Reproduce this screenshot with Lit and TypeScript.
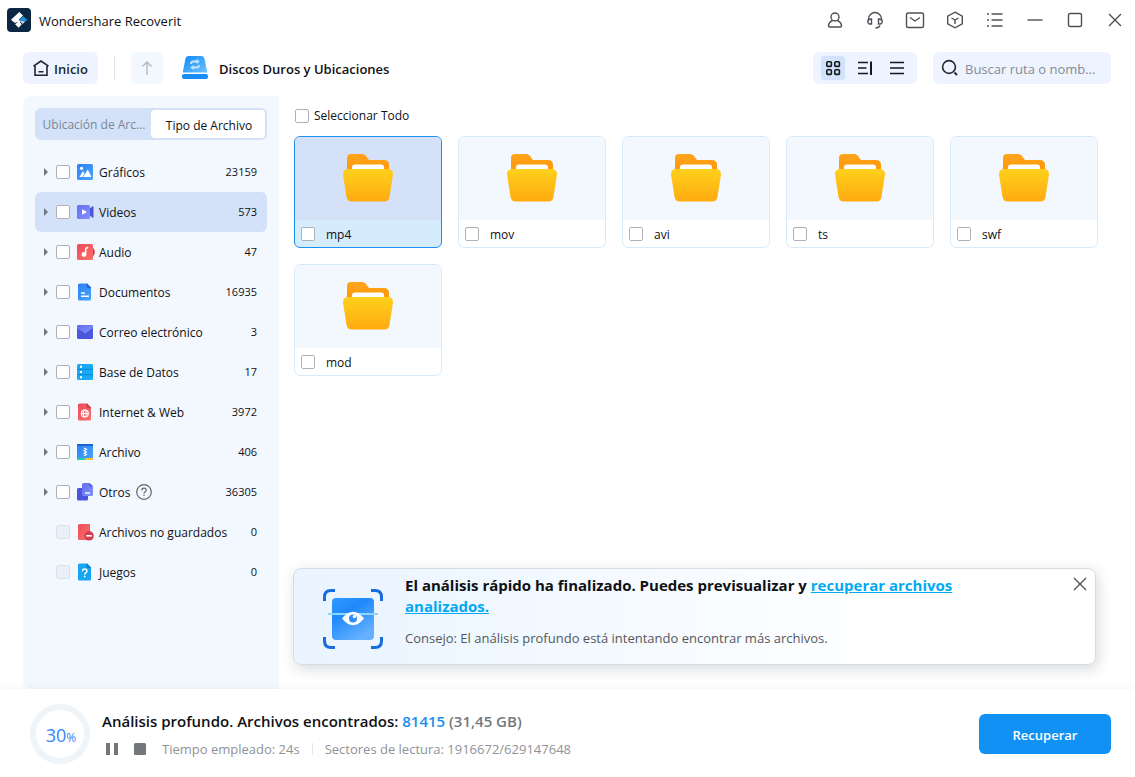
import { LitElement, html, svg, css, nothing, TemplateResult } from "lit";
import { customElement, property, state } from "lit/decorators.js";
import { classMap } from "lit/directives/class-map.js";

const controls = css`
  *,
  *::before,
  *::after {
    box-sizing: border-box;
  }
  button {
    font: inherit;
    color: inherit;
    border: 0;
    padding: 0;
    background: none;
    cursor: pointer;
    display: flex;
    align-items: center;
    justify-content: center;
  }
  svg {
    display: block;
    flex: none;
  }
  .check {
    appearance: none;
    flex: none;
    width: 14px;
    height: 14px;
    margin: 0;
    border: 1px solid #adb0b6;
    border-radius: 2px;
    background: #fff;
  }
  .check:checked {
    background: #1191f4;
    border-color: #1191f4;
  }
  .check:disabled {
    background: #e9f0f7;
    border-color: #d9e0ea;
  }
`;

const pageWithFold = (fill: string, fold: string, mark: TemplateResult) => svg`
  <path d="M3.500 .5H11l4 4v11.500a1.500 1.500 0 0 1-1.500 1.500h-10a1.500 1.500 0 0 1-1.500-1.500v-14a1.500 1.500 0 0 1 1.500-1.500z" fill=${fill}/>
  <path d="M11 .5l4 4v.8h-3a1.500 1.500 0 0 1-1.500-1.500V.5z" fill=${fold}/>
  ${mark}`;

const glyphs: Record<string, TemplateResult> = {
  image: svg`<rect x="1" y="1" width="16" height="16" rx="1.500" fill="url(#blue)"/>
    <circle cx="5.500" cy="5.300" r="1.600" fill="#fff"/>
    <path d="M3.500 14l3.400-6 1.600 2.400L6.500 14zM7.200 14l4.500-7.600L15.500 14z" fill="#fff"/>`,
  video: svg`<path d="M13 6l3.300-2.600q1.200-.6 1.200.6v10q0 1.200-1.200.6L13 12z" fill="#4a55d8"/>
    <rect x="1" y="2" width="13" height="14" rx="1.500" fill="url(#violet)"/>
    <path d="M6 6.200l5 2.800-5 2.800z" fill="#fff"/>`,
  audio: svg`<path d="M15 4q3.800 1 3.800 5.200T15 14z" fill="#d03c50"/>
    <rect x="1" y="1" width="16" height="16" rx="1.500" fill="url(#red)"/>
    <circle cx="8" cy="11.500" r="2.400" fill="#fff"/>
    <path d="M9.700 11.500V5.500l2.500-1.200" fill="none" stroke="#fff" stroke-width="1.500"/>`,
  doc: pageWithFold("url(#blue)", "#1c67e0", svg`<path d="M5 10h4M5 13.200h8" stroke="#fff" stroke-width="1.400"/>`),
  mail: svg`<rect x="1" y="2" width="16" height="14" rx="1.500" fill="#4b57dc"/>
    <path d="M2.500 2h13q1.500 0 1.500 1.500V5L9 10.500 1 5V3.500Q1 2 2.500 2z" fill="url(#violet)"/>`,
  database: svg`<rect x="1" y="1" width="16" height="16" rx="1.500" fill="#18abf3"/>
    <path d="M1 6.300h16M1 11.700h16" stroke="#0d86d6" stroke-width="1"/>
    <path d="M4 3.700h2M4 9h2M4 14.300h2" stroke="#fff" stroke-width="2"/>`,
  web: pageWithFold(
    "url(#red)",
    "#cf3b50",
    svg`<g fill="none" stroke="#fff" stroke-width="1.100"><circle cx="8.800" cy="10.500" r="3.500"/><ellipse cx="8.800" cy="10.500" rx="1.500" ry="3.500"/><path d="M5.300 10.500h7"/></g>`
  ),
  zip: svg`<rect x="1" y="1" width="16" height="16" rx="1" fill="url(#blue)"/>
    <path d="M1 3V2q0-1 1-1h14q1 0 1 1v1z" fill="#1b62d8"/>
    <path d="M1 15h8v2H2q-1 0-1-1z" fill="#25cfa5"/><path d="M9 15h8v1q0 1-1 1H9z" fill="#ffbe2e"/>
    <path d="M8 5l2.500 1.300L8 7.600l2.500 1.300L8 10.200l2.500 1.300L8 12.800" fill="none" stroke="#fff" stroke-width="1.100"/>`,
  other: svg`<rect x="1" y="5" width="11" height="12.500" rx="1.500" fill="#4a55dc"/>
    <path d="M7.500 0h6L17 3.500v8a1.500 1.500 0 0 1-1.500 1.500h-8A1.500 1.500 0 0 1 6 11.500v-10A1.500 1.500 0 0 1 7.500 0z" fill="url(#violet)"/>
    <path d="M13.500 0L17 3.500h-2.500q-1 0-1-1z" fill="#4a55dc"/>
    <path d="M9 10h5" stroke="#fff" stroke-width="1.400"/>`,
  unsaved: svg`<path d="M3.500 1H14v16H3.500Q2 17 2 15.500v-13Q2 1 3.500 1z" fill="url(#red)"/>
    <circle cx="13" cy="12.800" r="4.800" fill="#d63c4f"/>
    <path d="M10.200 12.800h5.600" stroke="#fff" stroke-width="1.600"/>`,
  game: pageWithFold(
    "#16a5f2",
    "#0d7fd0",
    svg`<path d="M6.500 8.200q0-2.200 2.200-2.200t2.200 2q0 1.200-1.200 1.800-1 .5-1 1.700" fill="none" stroke="#fff" stroke-width="1.500"/><rect x="7.900" y="12.700" width="1.600" height="1.600" fill="#fff"/>`
  ),
};

@customElement("category-row")
class CategoryRow extends LitElement {
  @property() label = "";
  @property() glyph = "";
  @property({ type: Number }) count = 0;
  @property({ type: Boolean, reflect: true }) selected = false;
  @property({ type: Boolean }) empty = false;
  @property({ type: Boolean }) help = false;

  static styles = [
    controls,
    css`
      :host {
        display: flex;
        align-items: center;
        height: 40px;
        padding: 0 10px 0 8px;
        border-radius: 6px;
      }
      :host([selected]) {
        background: #d4e2f9;
      }
      .expand {
        width: 6px;
        height: 16px;
        margin-right: 7px;
      }
      .name {
        display: flex;
        align-items: center;
        gap: 6px;
        flex: 1;
        min-width: 0;
      }
      .name svg {
        margin-right: -1px;
      }
      .text {
        padding-top: 2px;
        white-space: nowrap;
      }
      .count {
        font-size: 11px;
      }
    `,
  ];

  render() {
    return html`
      ${this.empty
        ? html`<span class="expand"></span>`
        : html`<button class="expand" aria-label="Expandir">
            <svg width="6" height="8" viewBox="0 0 6 8"><path d="M1 0l4 4-4 4z" fill="#6f7680" /></svg>
          </button>`}
      <label class="name">
        <input class="check" type="checkbox" ?disabled=${this.empty} />
        <svg width="18" height="18" viewBox="0 0 18 18" overflow="visible">
          <defs>
            <linearGradient id="blue" x1="0" y1="0" x2="1" y2="1"><stop stop-color="#2f80f5" /><stop offset="1" stop-color="#46a6fb" /></linearGradient>
            <linearGradient id="violet" x1="0" y1="0" x2="1" y2="1"><stop stop-color="#636df2" /><stop offset="1" stop-color="#8392fb" /></linearGradient>
            <linearGradient id="red" x1="0" y1="0" x2="1" y2="1"><stop stop-color="#ee4c5c" /><stop offset="1" stop-color="#fb7068" /></linearGradient>
          </defs>
          ${glyphs[this.glyph]}
        </svg>
        <span class="text">${this.label}</span>
        ${this.help
          ? html`<svg width="16" height="16" viewBox="0 0 16 16" fill="none" stroke="#5f656d" stroke-width="1.2">
              <circle cx="8" cy="8" r="7.300" />
              <path d="M5.800 6.600q0-2.400 2.200-2.400t2.200 2q0 1.200-1.200 1.800-1 .6-1 1.700M8 10.800v1.300" />
            </svg>`
          : nothing}
      </label>
      <span class="count">${this.count}</span>
    `;
  }
}

@customElement("folder-card")
class FolderCard extends LitElement {
  @property() name = "";
  @property({ type: Boolean, reflect: true }) selected = false;

  static styles = [
    controls,
    css`
      :host {
        display: flex;
        flex-direction: column;
        height: 112px;
        border: 1px solid #d8ebfb;
        border-radius: 6px;
        overflow: hidden;
        background: #fff;
        box-sizing: border-box;
      }
      :host([selected]) {
        border-color: #1b90ef;
        background: #d5ecfd;
      }
      .preview {
        flex: 1;
        display: flex;
        align-items: center;
        justify-content: center;
        padding-bottom: 2px;
        background: #f3f8ff;
      }
      :host([selected]) .preview {
        background: #d4e1f9;
      }
      .caption {
        display: flex;
        align-items: center;
        gap: 11px;
        height: 27px;
        padding-left: 6px;
      }
      .caption span {
        padding-top: 2px;
      }
    `,
  ];

  render() {
    return html`
      <div class="preview">
        <svg width="50" height="48" viewBox="0 0 50 48">
          <defs>
            <linearGradient id="back" x1="0" y1="0" x2="0" y2="1"><stop stop-color="#ffa41f" /><stop offset="1" stop-color="#ff9500" /></linearGradient>
            <linearGradient id="front" x1="0" y1="0" x2="0" y2="1"><stop stop-color="#ffd01c" /><stop offset="1" stop-color="#ffab10" /></linearGradient>
          </defs>
          <path d="M4 20V4q0-4 4-4h11.500q2 0 3.200 1.600L26 6h15q5 0 5 5v9z" fill="url(#back)" />
          <path d="M9 20v-6.500q0-3 3-3h26q3 0 3 3V20z" fill="#fff" />
          <path d="M5 15h40q5 0 5 5.500l-3.500 22.500q-1 4.500-5 4.500h-33q-4 0-5-4.500L0 20.500Q0 15 5 15z" fill="url(#front)" />
        </svg>
      </div>
      <label class="caption"><input class="check" type="checkbox" /><span>${this.name}</span></label>
    `;
  }
}

const windowIcons: [string, TemplateResult][] = [
  ["Cuenta", svg`<circle cx="8" cy="5" r="4"/><path d="M5.500 8.500Q1.500 10.500 1.500 14q0 1 1 1h11q1 0 1-1 0-3.500-4-5.500"/>`],
  ["Soporte", svg`<path d="M1.500 8V7a6.500 6.500 0 0 1 13 0v1M8.500 16q3.500 0 4.500-2.500"/><path d="M4.500 7v5Q1 12.500.7 9.500 1 7 4.500 7zM11.500 7v5q3.500.5 3.800-2.500Q15 7 11.500 7z"/>`],
  ["Mensajes", svg`<rect x="-.5" y="1" width="17" height="14.500" rx="1.500"/><path d="M3 5.500l5 3.500 5-3.500"/>`],
  ["Productos", svg`<path d="M8 .2l7.300 3.900v7.800L8 15.800.7 11.900V4.100z"/><path d="M4.500 6L8 8l3.500-2M8 8v4"/>`],
  ["Menú", svg`<path d="M4.500 2h11M4.500 8h11M4.500 14h11"/><path d="M0 2h2M0 8h2M0 14h2"/>`],
  ["Minimizar", svg`<path d="M.5 8h15"/>`],
  ["Maximizar", svg`<rect x="1.500" y="1.500" width="13" height="13" rx="1.500"/>`],
  ["Cerrar", svg`<path d="M2 2l12 12M14 2L2 14"/>`],
];

const viewIcons: [string, TemplateResult][] = [
  ["Cuadrícula", svg`<g fill="none" stroke="#15191f" stroke-width="1.600"><rect x="1.800" y="1.800" width="4.600" height="4.600" rx="1"/><rect x="9.800" y="1.800" width="4.600" height="4.600" rx="1"/><rect x="1.800" y="9.800" width="4.600" height="4.600" rx="1"/><rect x="9.800" y="9.800" width="4.600" height="4.600" rx="1"/></g>`],
  ["Panel", svg`<path d="M1 2.500h10M1 8h8.500M1 13.500h10" stroke="#15191f" stroke-width="1.600"/><path d="M14 1.500v13.500" stroke="#15191f" stroke-width="2"/>`],
  ["Lista", svg`<path d="M1 2.500h14M1 8h14M1 13.500h14" stroke="#15191f" stroke-width="1.600"/>`],
];

const categories = [
  { label: "Gráficos", glyph: "image", count: 23159 },
  { label: "Videos", glyph: "video", count: 573 },
  { label: "Audio", glyph: "audio", count: 47 },
  { label: "Documentos", glyph: "doc", count: 16935 },
  { label: "Correo electrónico", glyph: "mail", count: 3 },
  { label: "Base de Datos", glyph: "database", count: 17 },
  { label: "Internet & Web", glyph: "web", count: 3972 },
  { label: "Archivo", glyph: "zip", count: 406 },
  { label: "Otros", glyph: "other", count: 36305, help: true },
  { label: "Archivos no guardados", glyph: "unsaved", count: 0, empty: true },
  { label: "Juegos", glyph: "game", count: 0, empty: true },
];

const folders = ["mp4", "mov", "avi", "ts", "swf", "mod"];

@customElement("app-root")
class AppRoot extends LitElement {
  @state() private category = "Videos";
  @state() private folder = "mp4";
  @state() private view = 0;
  @state() private notice = true;

  static styles = [
    controls,
    css`
      :host {
        display: flex;
        flex-direction: column;
        min-height: 100vh;
        background: #fff;
        color: #101114;
        font: 12px/18px "Open Sans", "Noto Sans", sans-serif;
      }
      .titlebar {
        display: flex;
        align-items: center;
        height: 40px;
        padding-left: 7px;
        gap: 8px;
        font-size: 13px;
      }
      .title,
      .place span,
      .home span {
        padding-top: 2px;
      }
      .window-buttons {
        display: flex;
        margin-left: auto;
      }
      .window-buttons button {
        width: 40px;
        height: 40px;
      }
      .window-buttons svg,
      .dismiss svg {
        fill: none;
        stroke: #4d5157;
        stroke-width: 1.4;
        overflow: visible;
      }
      .toolbar {
        display: flex;
        align-items: center;
        height: 56px;
        padding: 0 24px 0 23px;
        font-weight: 600;
        font-size: 13px;
      }
      .home {
        height: 32px;
        width: 75px;
        gap: 5px;
        border-radius: 6px;
        background: #edf4ff;
        color: #22262d;
      }
      .rule {
        width: 1px;
        height: 24px;
        margin: 0 16px;
        background: #e4e6ea;
      }
      .up {
        width: 32px;
        height: 32px;
        border-radius: 6px;
        background: #f3f8ff;
      }
      .place {
        display: flex;
        align-items: center;
        gap: 11px;
        margin: 0 auto 0 19px;
      }
      .views {
        display: flex;
        gap: 8px;
        padding: 4px 8px;
        margin-right: 16px;
        border-radius: 6px;
        background: #edf4ff;
      }
      .views button {
        width: 24px;
        height: 24px;
        border-radius: 3px;
      }
      .views .on {
        background: #d3e2fb;
      }
      .search {
        display: flex;
        align-items: center;
        gap: 6px;
        width: 178px;
        height: 32px;
        padding: 0 8px;
        border-radius: 6px;
        background: #edf4ff;
      }
      .search input {
        flex: 1;
        min-width: 0;
        padding: 2px 0 0;
        border: 0;
        outline: 0;
        background: none;
        font: 13px/18px "Open Sans", "Noto Sans", sans-serif;
      }
      .search input::placeholder {
        color: #858b94;
      }
      .body {
        flex: 1;
        display: flex;
        padding-left: 23px;
      }
      .sidebar {
        width: 256px;
        flex: none;
        padding: 12px;
        border-radius: 8px 0 0 8px;
        background: #f3f8ff;
      }
      .tabs {
        display: grid;
        grid-template-columns: 116px 1fr;
        height: 32px;
        margin-bottom: 12px;
        border-radius: 6px;
        background: #d4e2f9;
        color: #7b8794;
      }
      .tabs button {
        padding: 2px 0 0 2px;
      }
      .tabs .on {
        margin: 2px 2px 2px 0;
        padding-top: 4px;
        border-radius: 4px;
        background: #fff;
        color: #101114;
      }
      .content {
        flex: 1;
        min-width: 0;
        display: flex;
        flex-direction: column;
        padding-left: 15px;
      }
      .all {
        display: flex;
        align-items: center;
        gap: 5px;
        height: 40px;
        padding-left: 1px;
      }
      .grid {
        display: grid;
        grid-template-columns: repeat(auto-fill, 148px);
        gap: 16px;
      }
      .notice {
        display: flex;
        gap: 21px;
        min-height: 97px;
        margin: auto 39px 24px -1px;
        padding: 0 8px 0 28px;
        border: 1px solid #d5dce3;
        border-radius: 8px;
        background: linear-gradient(90deg, #e9f4ff, #fff 75%);
        box-shadow: 2px 4px 14px rgba(40, 45, 60, 0.18);
      }
      .scan {
        margin-top: 19px;
      }
      .message {
        flex: 1;
        padding-top: 6px;
      }
      .message h2 {
        max-width: 580px;
        margin: 0 0 11px;
        font-size: 15px;
        line-height: 21px;
        font-weight: 700;
      }
      .message a {
        color: #04a9f4;
      }
      .message p {
        margin: 0;
        font-size: 13px;
        line-height: 20px;
        color: #53575e;
      }
      .dismiss {
        width: 14px;
        height: 30px;
      }
      .footer {
        display: flex;
        align-items: center;
        gap: 12px;
        height: 88px;
        padding: 2px 24px 0 30px;
        background: #fff;
        box-shadow: 0 0 8px rgba(0, 0, 0, 0.06);
        z-index: 1;
      }
      .ring {
        width: 60px;
        height: 60px;
        flex: none;
        display: flex;
        align-items: baseline;
        justify-content: center;
        padding-left: 2px;
        border: 6px solid #eef4f7;
        border-radius: 50%;
        color: #3485fb;
        font-size: 18px;
        line-height: 50px;
      }
      .ring small {
        font-size: 12px;
      }
      .status {
        flex: 1;
      }
      .status h1 {
        margin: 0 0 8px;
        font-size: 15px;
        line-height: 22px;
        font-weight: 600;
      }
      .found {
        color: #1590f0;
      }
      .size {
        color: #74787e;
      }
      .meta {
        display: flex;
        align-items: center;
        gap: 12px;
        padding-left: 2px;
        color: #8f9398;
        font-size: 13px;
        line-height: 18px;
      }
      .meta button {
        width: 16px;
        height: 18px;
      }
      .meta .elapsed {
        margin-left: 2px;
      }
      .meta .rule {
        height: 12px;
        margin: 0;
      }
      .recover {
        width: 132px;
        height: 40px;
        border-radius: 6px;
        padding-top: 2px;
        background: #1191f4;
        color: #fff;
        font-size: 13px;
        font-weight: 600;
      }
    `,
  ];

  render() {
    return html`
      <header class="titlebar">
        <svg width="24" height="24" viewBox="0 0 24 24">
          <rect width="24" height="24" rx="4" fill="#0b2744" />
          <path d="M12.300 4L16 7.600l-4.200 4.100 2.700 2.600-5.300-.1-1.300.8L4 11.800z" fill="#fff" />
          <path d="M16.300 8.300l4.300 3.900-2.300.9h-5.200l-1-1z" fill="#1d93da" />
          <path d="M11.700 13.200l3 3-3 3.600-3.600-3.500z" fill="#fff" />
          <path d="M13.600 13.300h4.700L15.500 16z" fill="#e4eef6" />
        </svg>
        <span class="title">Wondershare Recoverit</span>
        <div class="window-buttons">
          ${windowIcons.map(([name, icon]) => html`<button aria-label=${name}><svg width="16" height="16" viewBox="0 0 16 16">${icon}</svg></button>`)}
        </div>
      </header>

      <nav class="toolbar">
        <button class="home">
          <svg width="16" height="18" viewBox="0 0 16 18" fill="none" stroke="#22262d" stroke-width="1.6">
            <path d="M.5 7.200L8 2l7.500 5.200M2 7v9.200h12V7M5.500 12.800h5" />
          </svg>
          <span>Inicio</span>
        </button>
        <span class="rule"></span>
        <button class="up" aria-label="Subir">
          <svg width="14" height="14" viewBox="0 0 14 14" fill="none" stroke="#b1b7c1" stroke-width="1.4"><path d="M7 14V1M2.500 5.500L7 1l4.500 4.500" /></svg>
        </button>
        <div class="place">
          <svg width="26" height="24" viewBox="0 0 26 24">
            <defs><linearGradient id="disk" x1="0" y1="0" x2="1" y2="1"><stop stop-color="#1289f5" /><stop offset="1" stop-color="#6cc3ff" /></linearGradient></defs>
            <path d="M7 0h12q3 0 3.600 3L25.300 16.500H.7L3.400 3Q4 0 7 0z" fill="url(#disk)" />
            <rect x="0" y="18" width="26" height="5" rx="2" fill="#168df7" />
            <path d="M9 8q0-2.500 2.500-2.500H15M17 9q0 2.500-2.500 2.500H11" fill="none" stroke="#c4e6ff" stroke-width="1.800" />
            <path d="M14.500 3l3.300 2.500-3.300 2.500zM11.500 9l-3.300 2.500 3.300 2.500z" fill="#c4e6ff" />
          </svg>
          <span>Discos Duros y Ubicaciones</span>
        </div>
        <div class="views">
          ${viewIcons.map(
            ([name, icon], i) => html`<button class=${classMap({ on: i === this.view })} aria-label=${name} @click=${() => (this.view = i)}>
              <svg width="16" height="16" viewBox="0 0 16 16">${icon}</svg>
            </button>`
          )}
        </div>
        <label class="search">
          <svg width="18" height="18" viewBox="0 0 18 18" fill="none" stroke="#22262d" stroke-width="1.6">
            <circle cx="8" cy="8" r="6.400" /><path d="M13.500 13.500l2.500 2.500" stroke-width="2" />
          </svg>
          <input type="text" aria-label="Buscar" placeholder="Buscar ruta o nomb..." />
        </label>
      </nav>

      <div class="body">
        <aside class="sidebar">
          <div class="tabs">
            <button>Ubicación de Arc...</button>
            <button class="on">Tipo de Archivo</button>
          </div>
          ${categories.map(
            (c) => html`<category-row
              .label=${c.label}
              .glyph=${c.glyph}
              .count=${c.count}
              .empty=${!!c.empty}
              .help=${!!c.help}
              ?selected=${c.label === this.category}
              @click=${() => (this.category = c.label)}
            ></category-row>`
          )}
        </aside>
        <main class="content">
          <label class="all"><input class="check" type="checkbox" />Seleccionar Todo</label>
          <div class="grid">
            ${folders.map((f) => html`<folder-card .name=${f} ?selected=${f === this.folder} @click=${() => (this.folder = f)}></folder-card>`)}
          </div>
          ${this.notice
            ? html`<section class="notice">
                <svg class="scan" width="62" height="62" viewBox="0 0 62 62">
                  <defs><linearGradient id="scan" x1="0" y1="0" x2=".6" y2="1"><stop stop-color="#2f9bff" /><stop offset=".4" stop-color="#2089fb" /><stop offset="1" stop-color="#66b1ff" /></linearGradient></defs>
                  <path d="M2.500 13V9q0-6.500 6.500-6.500h4M49 2.500h4q6.500 0 6.500 6.500v4M59.500 49v4q0 6.500-6.500 6.500h-4M13 59.500H9q-6.500 0-6.500-6.500v-4" fill="none" stroke="#176de0" stroke-width="3" />
                  <rect x="10" y="10" width="42" height="42" rx="4" fill="url(#scan)" />
                  <path d="M6 26h50" stroke="#8ad8fd" stroke-width="2" />
                  <path d="M20 30.500Q31 17 42 30.500 31 44 20 30.500z" fill="#fff" />
                  <circle cx="31" cy="30.500" r="4" fill="#2f8ff8" /><circle cx="32.500" cy="28.500" r="1.700" fill="#fff" />
                </svg>
                <div class="message">
                  <h2>El análisis rápido ha finalizado. Puedes previsualizar y <a href="#">recuperar archivos analizados.</a></h2>
                  <p>Consejo: El análisis profundo está intentando encontrar más archivos.</p>
                </div>
                <button class="dismiss" aria-label="Cerrar aviso" @click=${() => (this.notice = false)}>
                  <svg width="14" height="14" viewBox="0 0 14 14"><path d="M1 1l12 12M13 1L1 13" /></svg>
                </button>
              </section>`
            : nothing}
        </main>
      </div>

      <footer class="footer">
        <div class="ring"><span>30</span><small>%</small></div>
        <div class="status">
          <h1>Análisis profundo. Archivos encontrados: <span class="found">81415</span> <span class="size">(31,45 GB)</span></h1>
          <div class="meta">
            <button aria-label="Pausar"><svg width="12" height="12" viewBox="0 0 12 12" fill="#74787d"><rect width="4" height="12" /><rect x="8" width="4" height="12" /></svg></button>
            <button aria-label="Detener"><svg width="12" height="12" viewBox="0 0 12 12" fill="#74787d"><rect width="12" height="12" rx="1.5" /></svg></button>
            <span class="elapsed">Tiempo empleado: 24s</span>
            <span class="rule"></span>
            <span>Sectores de lectura: 1916672/629147648</span>
          </div>
        </div>
        <button class="recover">Recuperar</button>
      </footer>
    `;
  }
}
